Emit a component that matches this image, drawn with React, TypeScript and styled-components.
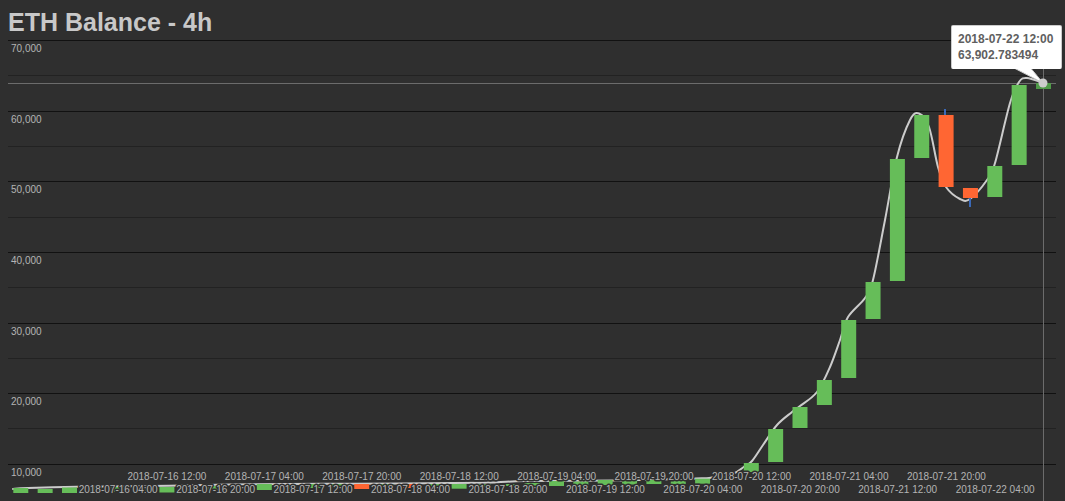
import React from "react";
import styled, { createGlobalStyle } from "styled-components";

const GlobalStyle = createGlobalStyle`
  html, body { margin: 0; padding: 0; background: #2f2f2f; overflow: hidden; }
  body { font-family: "Liberation Sans", Arial, sans-serif; }
`;

const Page = styled.main`
  width: 1065px;
  height: 501px;
  background: #2f2f2f;
`;

const Title = styled.h1`
  box-sizing: border-box;
  height: 40px;
  margin: 0;
  padding: 8px 8px 4px;
  font-size: 25px;
  line-height: 28px;
  font-weight: 700;
  color: #c8c8c8;
`;

const ChartFrame = styled.section`
  position: relative;
  width: 1065px;
  height: 461px;
`;

const ChartSvg = styled.svg`
  display: block;
  width: 1065px;
  height: 461px;
`;

const GridLine = styled.line<{ $major: boolean }>`
  stroke: ${(p) => (p.$major ? "#111111" : "#222222")};
  stroke-width: 1;
`;

const HoverLine = styled.line`
  stroke: #6c6c6c;
  stroke-width: 1;
`;

const AxisLabel = styled.text`
  font-family: "Liberation Sans", Arial, sans-serif;
  font-size: 10px;
  fill: #b4b4b4;
`;

const DateLabel = styled(AxisLabel)`
  paint-order: stroke;
  stroke: #2f2f2f;
  stroke-width: 3px;
  stroke-linejoin: round;
`;

const Curve = styled.path`
  fill: none;
  stroke: #cccccc;
  stroke-width: 2;
  stroke-linecap: round;
`;

const Candle = styled.rect<{ $down: boolean; $active: boolean }>`
  fill: ${(p) => (p.$active ? "#4f9a48" : p.$down ? "#ff6633" : "#66bd59")};
`;

const Wick = styled.line`
  stroke: #3a69b8;
  stroke-width: 2;
`;

const Marker = styled.circle`
  fill: #cccccc;
`;

const TooltipArrow = styled.path`
  fill: #ffffff;
  stroke: #cccccc;
  stroke-width: 1;
`;

const Tooltip = styled.div`
  position: absolute;
  left: 951px;
  top: -15px;
  box-sizing: border-box;
  width: 111px;
  height: 44px;
  padding: 5px 6px;
  background: #ffffff;
  border: 1px solid #cccccc;
  border-bottom-color: transparent;
  border-radius: 2px;
  font-size: 12px;
  line-height: 16px;
  font-weight: 700;
  color: #5f5f5f;
  white-space: nowrap;
`;

const yLabels = ["70,000", "60,000", "50,000", "40,000", "30,000", "20,000", "10,000"];
const Y_TOP = 40.5;
const Y_STEP = 70.63;
const gridLines = Array.from({ length: 13 }, (_, i) => ({
  y: Math.round(Y_TOP + (i * Y_STEP) / 2 - 0.5) + 0.5,
  major: i % 2 === 0,
}));

const dates = [
  "07-16 04:00", "07-16 12:00", "07-16 20:00", "07-17 04:00", "07-17 12:00",
  "07-17 20:00", "07-18 04:00", "07-18 12:00", "07-18 20:00", "07-19 04:00",
  "07-19 12:00", "07-19 20:00", "07-20 04:00", "07-20 12:00", "07-20 20:00",
  "07-21 04:00", "07-21 12:00", "07-21 20:00", "07-22 04:00",
];

// top, bottom, falling? — left to right, one per 4h step
const candles: [number, number, boolean?][] = [
  [488, 493], [489, 493], [487.5, 493], [487, 492], [487, 492], [487, 492],
  [487, 492.5], [486, 491], [486, 490], [486, 489], [484, 490], [485, 489],
  [484, 488], [484, 488], [484, 489, true], [484, 488], [484, 488, true], [484, 487],
  [484, 488.7], [484, 487], [484, 486], [483, 486], [481, 486], [481.6, 485],
  [480, 485], [480, 484.5], [480, 484], [481, 484], [478.7, 483.7], [476, 479],
  [463, 472], [429, 462], [407, 428], [380, 405], [320, 378], [282, 319],
  [159, 281], [115, 158], [115, 187, true], [188, 198, true], [166, 197], [85, 165],
  [83, 89],
];
const CANDLE_STEP = 24.35;
const candleLeft = (i: number) => 1036 - (candles.length - 1 - i) * CANDLE_STEP;

const curvePoints: [number, number][] = [
  [13, 489], [28, 488], [77, 486.7], [150, 486], [230, 484.5], [350, 483.7], [480, 482.8],
  [525, 481], [613, 480.5], [695, 478.5], [712, 477.5], [733, 473.7], [745, 466],
  [752, 461], [763, 445], [777, 425], [792, 412], [800, 406], [817, 392], [830, 367],
  [840, 340], [848, 317], [865, 298], [873, 280], [885, 220], [897, 157], [910, 120],
  [919, 113.5], [929, 127], [938, 167], [946, 187], [960, 199], [970, 199], [987, 180],
  [995, 163], [1010, 103], [1019, 82], [1027, 78], [1043, 83],
];

function smoothPath(pts: [number, number][]) {
  let d = `M${pts[0][0]} ${pts[0][1]}`;
  for (let i = 0; i < pts.length - 1; i++) {
    const p0 = pts[Math.max(0, i - 1)];
    const p1 = pts[i];
    const p2 = pts[i + 1];
    const p3 = pts[Math.min(pts.length - 1, i + 2)];
    const c1x = p1[0] + (p2[0] - p0[0]) / 6;
    const c1y = p1[1] + (p2[1] - p0[1]) / 6;
    const c2x = p2[0] - (p3[0] - p1[0]) / 6;
    const c2y = p2[1] - (p3[1] - p1[1]) / 6;
    d += `C${c1x.toFixed(1)} ${c1y.toFixed(1)} ${c2x.toFixed(1)} ${c2y.toFixed(1)} ${p2[0]} ${p2[1]}`;
  }
  return d;
}

export default function App() {
  return (
    <Page>
      <GlobalStyle />
      <Title>ETH Balance - 4h</Title>
      <ChartFrame>
        <ChartSvg viewBox="0 40 1065 461">
          {gridLines.map((g) => (
            <GridLine key={g.y} $major={g.major} x1={8} x2={1056} y1={g.y} y2={g.y} />
          ))}
          <HoverLine x1={8} x2={1056} y1={83.5} y2={83.5} />
          <HoverLine x1={1043.5} x2={1043.5} y1={69} y2={501} />
          {yLabels.map((label, i) => (
            <AxisLabel key={label} x={11} y={52 + i * 70.67}>
              {label}
            </AxisLabel>
          ))}
          <Curve d={smoothPath(curvePoints)} />
          <Wick x1={945} x2={945} y1={109} y2={115} />
          <Wick x1={970} x2={970} y1={198} y2={207} />
          {candles.map(([top, bottom, down], i) => (
            <Candle
              key={i}
              $down={!!down}
              $active={i === candles.length - 1}
              x={candleLeft(i)}
              y={top}
              width={15}
              height={bottom - top}
            />
          ))}
          {dates.map((date, i) => (
            <DateLabel key={date} x={78.7 + i * 48.72} y={i % 2 === 0 ? 493 : 480}>
              {`2018-${date}`}
            </DateLabel>
          ))}
          <TooltipArrow d="M1015 68.5L1043 83L1031 68.5" />
          <Marker cx={1043} cy={83} r={4.5} />
        </ChartSvg>
        <Tooltip>
          2018-07-22 12:00
          <br />
          63,902.783494
        </Tooltip>
      </ChartFrame>
    </Page>
  );
}
